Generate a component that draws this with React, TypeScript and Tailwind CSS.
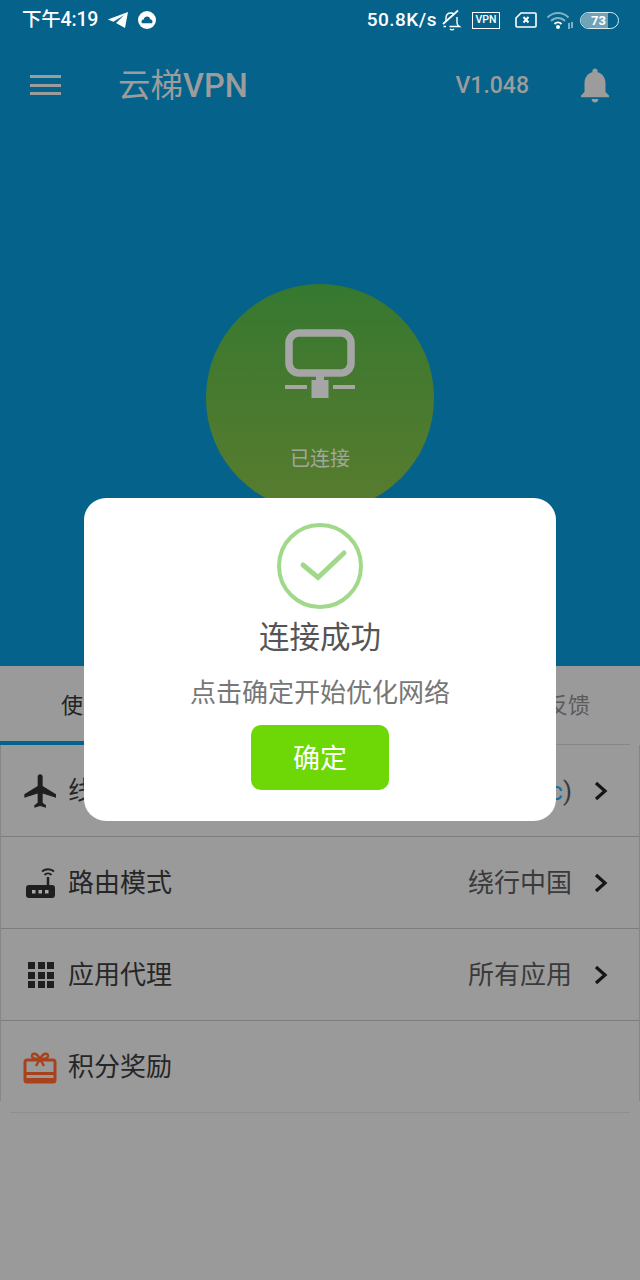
import React from "react";

const fontStack = "font-['Roboto','Noto_Sans_CJK_SC',sans-serif]";

const rows = [
  { label: "线路选择", value: "自动(Basic)", icon: "plane" },
  { label: "路由模式", value: "绕行中国", icon: "router" },
  { label: "应用代理", value: "所有应用", icon: "grid" },
  { label: "积分奖励", value: "", icon: "gift" },
];

function StatusBar() {
  return (
    <div className="flex h-[40px] items-center pl-[22px] pr-[21px] text-white">
      <span className="text-[19.500px] font-medium tracking-[-0.2px]">下午4:19</span>
      <svg width="22" height="18" viewBox="0 0 22 18" className="ml-[9px]" fill="#fff">
        <path d="M21 1 0.8 8.6l5.6 2.2L17 4.2 9 12l9 5z" />
      </svg>
      <svg width="20" height="20" viewBox="0 0 20 20" className="ml-[8px]">
        <circle cx="10" cy="10" r="9" fill="#fff" />
        <path d="M5 13.2c-1.2-1.7 0-3.7 1.700-3.700C7 7.600 8.500 6.600 10 6.600c1.700 0 3 1.200 3.300 2.900 1.800 0 2.900 2.100 1.700 3.700z" fill="#05628a" />
      </svg>
      <span className="ml-auto text-[19px] font-medium tracking-[0.5px]">50.8K/s</span>
      <svg width="24" height="22" viewBox="0 0 24 22" className="ml-[3px]" fill="none" stroke="#fff" strokeWidth="1.400">
        <path d="M6 13V9c0-3 2-5 5-5 1.500 0 2.500.400 3.500 1.200" />
        <path d="M17 8v6c0 2 1 2.500 2.500 3.500H9.500M6 17.500H3.500" />
        <path d="M10 20c1 1 3 1 4 0" />
        <path d="M3 15 18 1.500" strokeWidth="1.700" />
      </svg>
      <span className="ml-[8px] flex h-[17px] w-[28px] items-center justify-center border-[1.500px] border-white text-[10.500px] font-medium leading-none">VPN</span>
      <svg width="22" height="18" viewBox="0 0 22 18" className="ml-[15px]" fill="none" stroke="#fff" strokeWidth="1.600">
        <path d="M6 2h14a1 1 0 0 1 1 1v12a1 1 0 0 1-1 1H2a1 1 0 0 1-1-1V7z" />
        <path d="m8.500 6 5 5.500M13.500 6l-5 5.500" strokeWidth="2" />
      </svg>
      <svg width="28" height="20" viewBox="0 0 28 20" className="ml-[9px]" fill="none">
        <path d="M1.500 7.500c6-6 15-6 21 0" stroke="#7fb0c6" strokeWidth="2" />
        <path d="M5 11c4-4 10-4 14 0" stroke="#7fb0c6" strokeWidth="2" />
        <path d="M8.500 14c2-2 5-2 7 0" stroke="#fff" strokeWidth="2" />
        <circle cx="12" cy="17" r="2" fill="#fff" />
        <path d="M23 13v6M26 12v6" stroke="#cfe0e8" strokeWidth="1.200" />
      </svg>
      <span className="relative ml-[6px] flex h-[17px] w-[39px] items-center overflow-hidden rounded-full border-[1.500px] border-[#dfeaf0]">
        <span className="h-full w-[27px] bg-[#6ea3b8]" />
        <span className="absolute left-[10px] text-[13px] font-bold leading-none text-white">73</span>
      </span>
    </div>
  );
}

function Header() {
  return (
    <div className="flex h-[90px] items-center pl-[30px] pr-[30px] text-[#9c9c9c]">
      <div className="flex w-[31px] flex-col gap-[5.500px]">
        <span className="h-[3px] bg-[#9c9c9c]" />
        <span className="h-[3px] bg-[#9c9c9c]" />
        <span className="h-[3px] bg-[#9c9c9c]" />
      </div>
      <span className="ml-[57px] pt-[3px] text-[32.500px] font-medium leading-none"><span className="font-normal">云梯</span>VPN</span>
      <span className="ml-auto pt-[1px] text-[23px] font-medium leading-none">V1.048</span>
      <svg width="42" height="42" viewBox="0 0 24 24" className="ml-[45px] -mr-[6px]" fill="#9c9c9c">
        <path d="M12 22c1.100 0 2-.900 2-2h-4c0 1.100.890 2 2 2zm6-6v-5c0-3.070-1.640-5.640-4.500-6.320V4c0-.830-.670-1.500-1.500-1.500s-1.500.670-1.500 1.500v.680C7.630 5.360 6 7.920 6 11v5l-2 2v1h16v-1l-2-2z" />
      </svg>
    </div>
  );
}

function RowIcon({ name }: { name: string }) {
  if (name === "plane") {
    return (
      <svg width="40" height="40" viewBox="0 0 24 24" fill="#1f1f1f" className="-ml-[2px] shrink-0">
        <path d="M21 16v-2l-8-5V3.500c0-.830-.670-1.500-1.500-1.500S10 2.670 10 3.500V9l-8 5v2l8-2.500V19l-2 1.500V22l3.500-1 3.500 1v-1.500L13 19v-5.500l8 2.500z" />
      </svg>
    );
  }
  if (name === "router") {
    return (
      <svg width="32" height="32" viewBox="0 0 32 32" className="ml-[2px] shrink-0">
        <rect x="1" y="18" width="29" height="13" rx="3" fill="#1f1f1f" />
        <path d="M23 19V10" stroke="#1f1f1f" strokeWidth="2.500" />
        <path d="M19.500 8c2-2 5-2 7 0M17 4.500c3.500-3 9-3 12 0" stroke="#1f1f1f" strokeWidth="1.800" fill="none" />
        <path d="M7 23h3.500v3.500H7zM13.500 23H17v3.500h-3.500zM20 23h3.500v3.500H20z" fill="#a8a8a8" />
      </svg>
    );
  }
  if (name === "grid") {
    return (
      <div className="ml-[5px] grid w-[26px] grid-cols-3 gap-[2.500px]">
        {Array.from({ length: 9 }).map((_, i) => (
          <span key={i} className="h-[7px] w-[7px] bg-[#1f1f1f]" />
        ))}
      </div>
    );
  }
  return (
    <svg width="34" height="34" viewBox="0 0 34 34" fill="none" className="shrink-0">
      <rect x="2" y="10" width="30" height="22" rx="2" stroke="#a8421c" strokeWidth="3" />
      <path d="M2 22h30v3H2zM2 28h30v3H2z" fill="#a8421c" />
      <path d="M17 9c-3-6-8-7-8-3 0 3 4 3 8 3zm0 0c3-6 8-7 8-3 0 3-4 3-8 3zm0 0-4 7m4-7 4 7" stroke="#a8421c" strokeWidth="2.400" />
    </svg>
  );
}

export default function App() {
  return (
    <div className={`relative flex h-[1280px] w-[640px] flex-col overflow-hidden bg-[#9a9a9a] ${fontStack}`}>
      <div className="flex h-[666px] flex-col bg-[#05628a]">
        <StatusBar />
        <Header />
        <div className="mt-[154px] flex justify-center">
          <div className="flex h-[228px] w-[228px] flex-col items-center rounded-full bg-gradient-to-b from-[#357830] to-[#587c2e] pt-[45px]">
            <svg width="70" height="70" viewBox="0 0 70 70">
              <rect x="4" y="4" width="62" height="40" rx="10" fill="none" stroke="#a6a6a6" strokeWidth="7.500" />
              <path d="M31 47h8v5h-8zM26.500 51h17v18h-17zM0 56h22v4H0zM48 56h22v4H48z" fill="#a6a6a6" />
            </svg>
            <span className="mt-[46px] text-[20px] leading-[28px] text-[#a3a79b]">已连接</span>
          </div>
        </div>
      </div>

      <div className="relative mr-[10px] flex h-[79px] items-center justify-between border-b border-[#868686]">
        <span className="ml-[61px] text-[22px] text-[#222]">使用</span>
        <span className="mr-[40px] text-[22px] text-[#5a5a5a]">反馈</span>
        <span className="absolute -bottom-[1px] left-0 h-[4px] w-[160px] bg-[#05628a]" />
      </div>

      <div className="flex flex-col border-x border-[#868686]">
        {rows.map((r, i) => (
          <div key={r.label} className={`flex items-center pl-[22px] pr-[30px] ${i === 3 ? "h-[80px] pt-[12px]" : "h-[92px] border-b border-[#7d7d7d] pt-[1px]"}`}>
            <span className="flex w-[45px] items-center"><RowIcon name={r.icon} /></span>
            <span className="text-[26px] text-[#262626]">{r.label}</span>
            {r.value && (
              <>
                <span className="ml-auto text-[26px] text-[#3a3a3a]">
                  {r.value.endsWith("c)") ? <>自动(Basi<span className="text-[#1b6e9c]">c</span>)</> : r.value}
                </span>
                <svg width="16" height="22" viewBox="0 0 16 22" className="ml-[21px]" fill="none" stroke="#161616" strokeWidth="3.200">
                  <path d="m3 3 9 8-9 8" />
                </svg>
              </>
            )}
          </div>
        ))}
      </div>
      <div className="mx-[10px] mt-[11px] h-px bg-[#8f8f8f]" />

      {/* dialog */}
      <div className="absolute left-[84px] top-[498px] flex h-[323px] w-[472px] flex-col items-center rounded-[22px] bg-white pt-[25px]">
        <svg width="86" height="86" viewBox="0 0 86 86" fill="none" stroke="#a0d98a" strokeWidth="4">
          <circle cx="43" cy="43" r="41" />
          <path d="M26 42 L41 54.500 L67 30" strokeWidth="5" strokeLinecap="round" />
        </svg>
        <span className="mt-[7px] text-[30.500px] leading-[44px] text-[#555]">连接成功</span>
        <span className="mt-[15px] text-[26px] leading-[36px] text-[#777]">点击确定开始优化网络</span>
        <button className="mt-[14px] flex h-[65px] w-[138px] items-center justify-center rounded-[10px] bg-[#6dd805] pt-[4px] text-[27px] text-white">确定</button>
      </div>
    </div>
  );
}
